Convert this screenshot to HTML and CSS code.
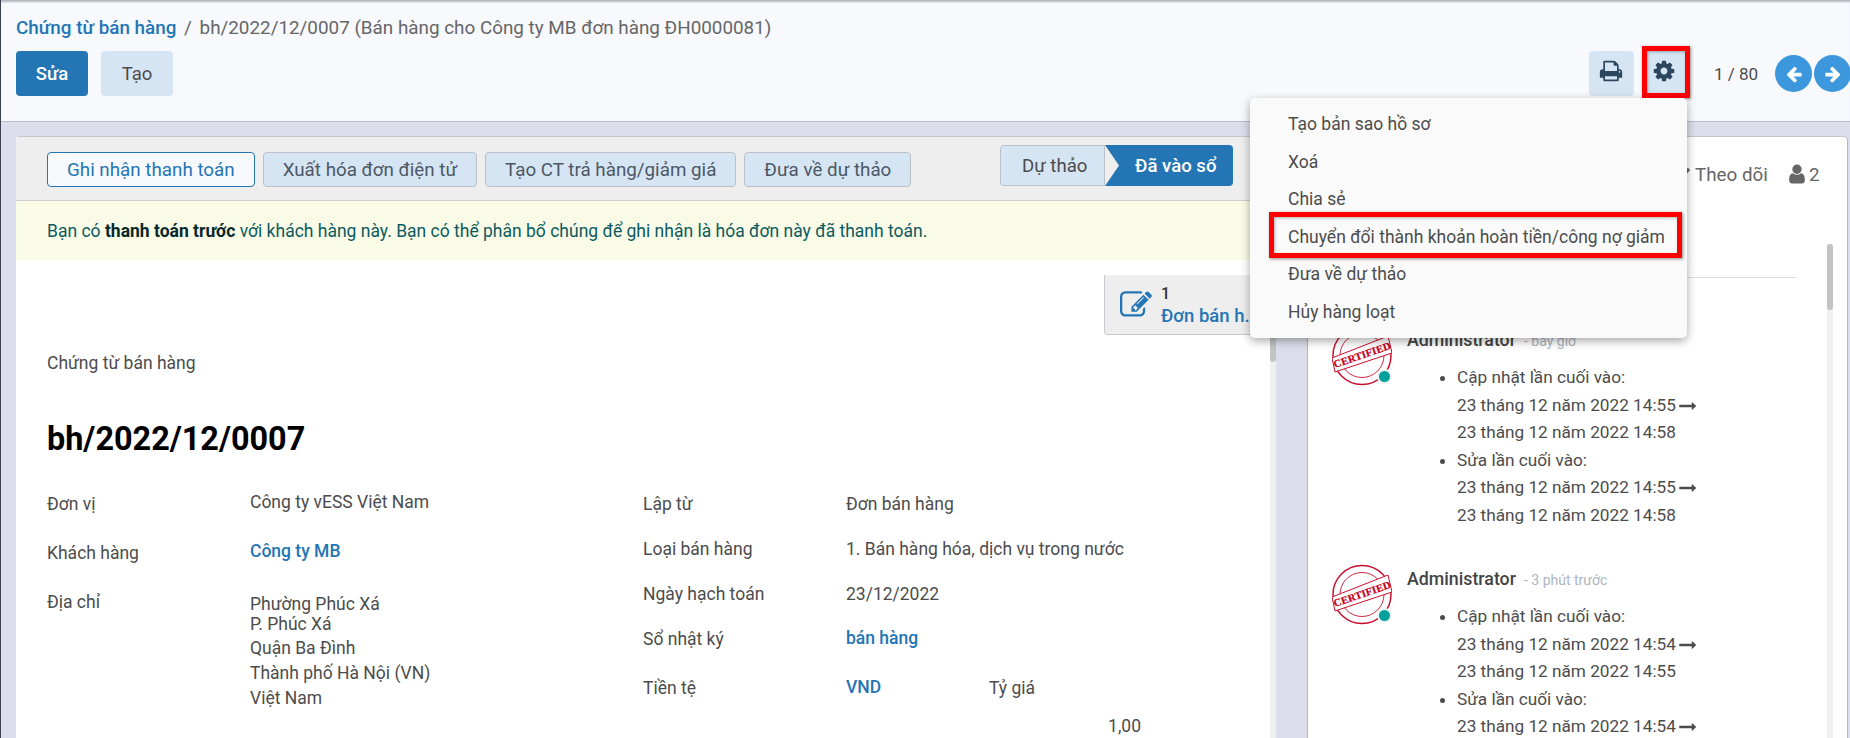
FILE: index.html
```html
<!DOCTYPE html>
<html lang="vi">
<head>
    <meta charset="UTF-8">
    <title>Chứng từ bán hàng</title>
    <link rel="stylesheet" href="styles.css">
</head>
<body>
    <header class="control_panel">
        <div class="breadcrumb">
            <a class="breadcrumb_link">Chứng từ bán hàng</a>
            <span class="breadcrumb_sep">/</span>
            <span>bh/2022/12/0007 (Bán hàng cho Công ty MB đơn hàng ĐH0000081)</span>
        </div>
        <div class="control_row">
            <button class="btn btn_primary">Sửa</button>
            <button class="btn btn_light">Tạo</button>
            <div class="control_right">
                <button class="icon_btn">
                    <svg class="icon_print" viewBox="0 0 1792 1792"><path d="M448 1536h896v-256h-896v256zm0-640h896v-384h-160q-40 0-68-28t-28-68v-160h-640v640zm1152 64q0-26-19-45t-45-19-45 19-19 45 19 45 45 19 45-19 19-45zm128 0v416q0 13-9.5 22.5t-22.5 9.5h-224v160q0 40-28 68t-68 28h-960q-40 0-68-28t-28-68v-160h-224q-13 0-22.5-9.5t-9.5-22.5v-416q0-79 56.5-135.5t135.5-56.5h64v-544q0-40 28-68t68-28h672q40 0 88 20t76 48l152 152q28 28 48 76t20 88v256h64q79 0 135.5 56.5t56.5 135.5z"/></svg>
                </button>
                <button class="icon_btn marked_btn">
                    <svg class="icon_gear" viewBox="0 0 1792 1792"><path d="M1152 896q0-106-75-181t-181-75-181 75-75 181 75 181 181 75 181-75 75-181zm512-109v222q0 12-8 23t-20 13l-185 28q-19 54-39 91 35 50 107 138 10 12 10 25t-9 23q-27 37-99 108t-94 71q-12 0-26-9l-138-108q-44 23-91 38-16 136-29 186-7 28-36 28h-222q-14 0-24.5-8.5t-11.5-21.5l-28-184q-49-16-90-37l-141 107q-10 9-25 9-14 0-25-11-126-114-165-168-7-10-7-23 0-12 8-23 15-21 51-66.5t54-70.5q-27-50-41-99l-183-27q-13-2-21-12.5t-8-23.5v-222q0-12 8-23t19-13l186-28q14-46 39-92-40-57-107-138-10-12-10-24 0-10 9-23 26-36 98.5-107.5t94.5-71.5q13 0 26 10l138 107q44-23 91-38 16-136 29-186 7-28 36-28h222q14 0 24.5 8.5t11.5 21.5l28 184q49 16 90 37l142-107q9-9 24-9 13 0 25 10 129 119 165 170 7 8 7 22 0 12-8 23-15 21-51 66.5t-54 70.5q26 50 41 98l183 28q13 2 21 12.5t8 23.5z"/></svg>
                </button>
                <span class="pager_text">1 / 80</span>
                <button class="nav_btn">
                    <svg viewBox="0 0 1792 1792"><path d="M1664 896v128q0 53-32.5 90.5t-84.5 37.5h-704l293 294q38 36 38 90t-38 90l-75 76q-37 37-90 37-52 0-91-37l-651-652q-37-37-37-90 0-52 37-91l651-650q38-38 91-38 52 0 90 38l75 74q38 38 38 91t-38 91l-293 293h704q52 0 84.5 37.5t32.5 90.5z"/></svg>
                </button>
                <button class="nav_btn">
                    <svg viewBox="0 0 1792 1792"><path d="M1600 960q0 54-37 91l-651 651q-39 37-91 37-51 0-90-37l-75-75q-38-38-38-91t38-91l293-293h-704q-52 0-84.5-37.5t-32.5-90.5v-128q0-53 32.5-90.5t84.5-37.5h704l-293-294q-38-36-38-90t38-90l75-75q38-38 90-38 53 0 91 38l651 651q37 35 37 90z"/></svg>
                </button>
            </div>
        </div>
        <ul class="action_menu">
            <li>Tạo bản sao hồ sơ</li>
            <li>Xoá</li>
            <li>Chia sẻ</li>
            <li class="marked_item">Chuyển đổi thành khoản hoàn tiền/công nợ giảm</li>
            <li>Đưa về dự thảo</li>
            <li>Hủy hàng loạt</li>
        </ul>
    </header>

    <main class="content">
        <section class="form_card">
            <div class="form_toolbar">
                <button class="tool_btn tool_btn_main">Ghi nhận thanh toán</button>
                <button class="tool_btn">Xuất hóa đơn điện tử</button>
                <button class="tool_btn">Tạo CT trả hàng/giảm giá</button>
                <button class="tool_btn">Đưa về dự thảo</button>
                <div class="statusbar">
                    <span class="status_item">Dự thảo</span>
                    <span class="status_item status_active">Đã vào sổ</span>
                </div>
            </div>
            <div class="form_alert">
                Bạn có <b>thanh toán trước</b> với khách hàng này. Bạn có thể phân bổ chúng để ghi nhận là hóa đơn này đã thanh toán.
            </div>
            <div class="form_scroll">
                <div class="sheet">
                    <div class="button_box">
                        <div class="smart_btn">
                            <svg class="icon_edit" viewBox="0 0 1792 1792"><path d="M888 1184l116-116-152-152-116 116v56h96v96h56zm440-720q-16-16-33 1l-350 350q-17 17-1 33t33-1l350-350q17-17 1-33zm80 594v190q0 119-84.5 203.5t-203.5 84.5h-832q-119 0-203.5-84.5t-84.5-203.5v-832q0-119 84.5-203.5t203.5-84.5h832q63 0 117 25 15 7 18 23 3 17-9 29l-49 49q-14 14-32 8-23-6-45-6h-832q-66 0-113 47t-47 113v832q0 66 47 113t113 47h832q66 0 113-47t47-113v-126q0-13 9-22l64-64q15-15 35-7t20 29zm-96-738l288 288-672 672h-288v-288zm444 132l-92 92-288-288 92-92q28-28 68-28t68 28l152 152q28 28 28 68t-28 68z"/></svg>
                            <div class="smart_text">
                                <div class="smart_count">1</div>
                                <div class="smart_label">Đơn bán h...</div>
                            </div>
                        </div>
                    </div>
                    <div class="sheet_kind">Chứng từ bán hàng</div>
                    <h1 class="sheet_title">bh/2022/12/0007</h1>
                    <div class="sheet_fields">
                        <div class="field_col field_col_left">
                            <div class="field_row">
                                <div class="field_label">Đơn vị</div>
                                <div class="field_value raised">Công ty vESS Việt Nam</div>
                            </div>
                            <div class="field_row">
                                <div class="field_label">Khách hàng</div>
                                <div class="field_value raised"><a class="link">Công ty MB</a></div>
                            </div>
                            <div class="field_row">
                                <div class="field_label">Địa chỉ</div>
                                <div class="field_value address">
                                    <div class="address_tight">Phường Phúc Xá</div>
                                    <div class="address_tight address_street">P. Phúc Xá</div>
                                    <div>Quận Ba Đình</div>
                                    <div>Thành phố Hà Nội (VN)</div>
                                    <div>Việt Nam</div>
                                </div>
                            </div>
                        </div>
                        <div class="field_col field_col_right">
                            <div class="field_row">
                                <div class="field_label">Lập từ</div>
                                <div class="field_value">Đơn bán hàng</div>
                            </div>
                            <div class="field_row">
                                <div class="field_label">Loại bán hàng</div>
                                <div class="field_value">1. Bán hàng hóa, dịch vụ trong nước</div>
                            </div>
                            <div class="field_row">
                                <div class="field_label">Ngày hạch toán</div>
                                <div class="field_value">23/12/2022</div>
                            </div>
                            <div class="field_row field_row_tall">
                                <div class="field_label">Sổ nhật ký</div>
                                <div class="field_value raised_small"><a class="link">bán hàng</a></div>
                            </div>
                            <div class="field_row currency_row">
                                <div class="field_label">Tiền tệ</div>
                                <div class="field_value raised_small currency_code"><a class="link">VND</a></div>
                                <div class="rate_label">Tỷ giá</div>
                            </div>
                            <div class="rate_value">1,00</div>
                        </div>
                    </div>
                </div>
                <div class="scroll_track"><div class="scroll_thumb sheet_thumb"></div></div>
            </div>
        </section>

        <aside class="chatter">
            <div class="chatter_top">
                <svg class="icon_check" viewBox="0 0 1792 1792"><path d="M1671 566q0 40-28 68l-724 724-136 136q-28 28-68 28t-68-28l-136-136-362-362q-28-28-28-68t28-68l136-136q28-28 68-28t68 28l294 295 656-657q28-28 68-28t68 28l136 136q28 28 28 68z"/></svg>
                <span class="follow_text">Theo dõi</span>
                <svg class="icon_user" viewBox="0 0 1792 1792"><path d="M1536 1399q0 109-62.5 187t-150.5 78h-854q-88 0-150.5-78t-62.5-187q0-85 8.5-160.5t31.5-152 58.5-131 94-89 134.5-34.5q131 128 313 128t313-128q76 0 134.5 34.5t94 89 58.5 131 31.5 152 8.5 160.5zm-256-887q0 159-112.5 271.5t-271.5 112.5-271.5-112.5-112.5-271.5 112.5-271.5 271.5-112.5 271.5 112.5 112.5 271.5z"/></svg>
                <span class="follower_count">2</span>
            </div>
            <div class="chatter_scroll">
                <div class="thread">
                    <div class="thread_sep"></div>
                    <article class="message">
                        <div class="avatar">
                            <svg viewBox="0 0 60 61">
                                <circle cx="30" cy="30.5" r="29" class="stamp_line"/>
                                <circle cx="30" cy="30.5" r="22" class="stamp_thin"/>
                                <polygon points="0,33 56,11 60,28 3,47" class="stamp_band"/>
                                <text x="30" y="33.5" transform="rotate(-19 30 29.5)" class="stamp_text">CERTIFIED</text>
                            </svg>
                            <span class="online_dot"></span>
                        </div>
                        <div class="message_body">
                            <div class="message_head"><span class="message_author">Administrator</span><span class="message_date">- bây giờ</span></div>
                            <ul class="track_list">
                                <li>Cập nhật lần cuối vào:
                                    <div>23 tháng 12 năm 2022 14:55<svg class="icon_arrow" viewBox="0 0 1792 1024"><path d="M1728 509q0 14-10 24l-384 354q-16 14-35 6-19-9-19-29v-224h-1248q-14 0-23-9t-9-23v-192q0-14 9-23t23-9h1248v-224q0-21 19-29t35 5l384 350q10 10 10 23z"/></svg></div>
                                    <div>23 tháng 12 năm 2022 14:58</div>
                                </li>
                                <li>Sửa lần cuối vào:
                                    <div>23 tháng 12 năm 2022 14:55<svg class="icon_arrow" viewBox="0 0 1792 1024"><path d="M1728 509q0 14-10 24l-384 354q-16 14-35 6-19-9-19-29v-224h-1248q-14 0-23-9t-9-23v-192q0-14 9-23t23-9h1248v-224q0-21 19-29t35 5l384 350q10 10 10 23z"/></svg></div>
                                    <div>23 tháng 12 năm 2022 14:58</div>
                                </li>
                            </ul>
                        </div>
                    </article>
                    <article class="message">
                        <div class="avatar">
                            <svg viewBox="0 0 60 61">
                                <circle cx="30" cy="30.5" r="29" class="stamp_line"/>
                                <circle cx="30" cy="30.5" r="22" class="stamp_thin"/>
                                <polygon points="0,33 56,11 60,28 3,47" class="stamp_band"/>
                                <text x="30" y="33.5" transform="rotate(-19 30 29.5)" class="stamp_text">CERTIFIED</text>
                            </svg>
                            <span class="online_dot"></span>
                        </div>
                        <div class="message_body">
                            <div class="message_head"><span class="message_author">Administrator</span><span class="message_date">- 3 phút trước</span></div>
                            <ul class="track_list">
                                <li>Cập nhật lần cuối vào:
                                    <div>23 tháng 12 năm 2022 14:54<svg class="icon_arrow" viewBox="0 0 1792 1024"><path d="M1728 509q0 14-10 24l-384 354q-16 14-35 6-19-9-19-29v-224h-1248q-14 0-23-9t-9-23v-192q0-14 9-23t23-9h1248v-224q0-21 19-29t35 5l384 350q10 10 10 23z"/></svg></div>
                                    <div>23 tháng 12 năm 2022 14:55</div>
                                </li>
                                <li>Sửa lần cuối vào:
                                    <div>23 tháng 12 năm 2022 14:54<svg class="icon_arrow" viewBox="0 0 1792 1024"><path d="M1728 509q0 14-10 24l-384 354q-16 14-35 6-19-9-19-29v-224h-1248q-14 0-23-9t-9-23v-192q0-14 9-23t23-9h1248v-224q0-21 19-29t35 5l384 350q10 10 10 23z"/></svg></div>
                                </li>
                            </ul>
                        </div>
                    </article>
                </div>
                <div class="scroll_track"><div class="scroll_thumb chatter_thumb"></div></div>
            </div>
        </aside>
    </main>
</body>
</html>
```

FILE: styles.css
```css
*,
*::after {
    box-sizing: border-box;
}
html,
body {
    height: 100%;
    margin: 0;
    overflow: hidden;
}
body {
    display: flex;
    flex-direction: column;
    background-color: #dcdfeb;
    border-left: 1px solid #3c4152;
    font-family: Roboto, "Noto Sans", sans-serif;
    font-size: 16px;
    color: #4c4c4c;
}
button {
    font-family: inherit;
    outline: none;
    cursor: pointer;
}

/* control panel */
.control_panel {
    position: relative;
    z-index: 5;
    height: 122px;
    flex: none;
    padding: 16px 0 0 15px;
    background-color: #f8f9fd;
    border-bottom: 1px solid #b9bccb;
    box-shadow: inset 0 3px 2px -1px #b4b6bd;
}
.breadcrumb {
    height: 24px;
    line-height: 24px;
    font-size: 18.85px;
    white-space: nowrap;
    color: #666;
}
.breadcrumb_link {
    font-weight: 500;
    color: #2475b4;
}
.breadcrumb_sep {
    margin: 0 3px;
}
.control_row {
    display: flex;
    align-items: center;
    margin-top: 11px;
}
.btn {
    width: 72px;
    height: 45px;
    margin-right: 13px;
    border: none;
    border-radius: 4px;
    font-size: 18.5px;
}
.btn_primary {
    background-color: #2475b4;
    color: #fff;
    font-weight: 500;
}
.btn_light {
    background-color: #d6e5f3;
    color: #4c4c4c;
}
.control_right {
    display: flex;
    align-items: center;
    margin-left: auto;
    margin-right: -1px;
}
.icon_btn {
    display: flex;
    align-items: center;
    justify-content: center;
    width: 45px;
    height: 45px;
    margin-right: 8px;
    padding: 0;
    border: none;
    border-radius: 4px;
    background-color: #d6e5f3;
}
.icon_print {
    width: 24px;
    height: 24px;
    margin-top: -5px;
    fill: #2c4660;
}
.icon_gear {
    width: 24px;
    height: 24px;
    margin-top: -5px;
    fill: #2c4660;
}
.marked_btn {
    position: relative;
    margin-right: 0;
}
.marked_btn::after {
    content: "";
    position: absolute;
    left: 0;
    top: -5px;
    width: 48px;
    height: 52px;
    border: 5px solid #f00;
    box-shadow: 1px 1px 3px rgba(0, 0, 0, 0.45), inset 1px 1px 3px rgba(0, 0, 0, 0.3);
}
.pager_text {
    margin: 0 17px 0 27px;
    font-size: 17px;
    white-space: nowrap;
}
.nav_btn {
    display: flex;
    align-items: center;
    justify-content: center;
    width: 37px;
    height: 37px;
    margin-right: 2px;
    padding: 0;
    border: none;
    border-radius: 50%;
    background-color: #3d97dd;
}
.nav_btn:last-child {
    margin-right: 0;
}
.nav_btn svg {
    width: 18px;
    height: 18px;
    fill: #fff;
}

/* dropdown */
.action_menu {
    position: absolute;
    left: 1249px;
    top: 98px;
    width: 437px;
    height: 240px;
    margin: 0;
    padding: 8px 0 0 38px;
    list-style: none;
    background-color: #fafafa;
    border-radius: 5px;
    box-shadow: 0 3px 10px rgba(0, 0, 0, 0.35);
}
.action_menu li {
    position: relative;
    height: 37.5px;
    line-height: 37.5px;
    font-size: 17.5px;
    white-space: nowrap;
}
.marked_item::after {
    content: "";
    position: absolute;
    left: -19px;
    top: -7px;
    width: 413px;
    height: 46px;
    border: 5px solid #f00;
    box-shadow: 1px 1px 3px rgba(0, 0, 0, 0.45), inset 1px 1px 3px rgba(0, 0, 0, 0.3);
}

/* main area */
.content {
    flex: 1;
    min-height: 0;
    display: flex;
    padding: 14px 2px 0 15px;
}
.form_card {
    width: 1260px;
    flex: none;
    display: flex;
    flex-direction: column;
    background-color: #fff;
    border-radius: 4px 4px 0 0;
    overflow: hidden;
}
.form_toolbar {
    position: relative;
    height: 65px;
    flex: none;
    display: flex;
    padding: 15px 43px 0 31px;
    background-color: #eee;
    border-top: 1px solid #c4c6cf;
    border-bottom: 1px solid #cfcfcf;
}
.tool_btn {
    height: 35px;
    margin-right: 8px;
    padding: 1px 19px 0;
    border: 1px solid #bcbfc6;
    border-radius: 4px;
    background-color: #d6e5f3;
    font-size: 18.8px;
    color: #4c5866;
    white-space: nowrap;
}
.tool_btn_main {
    background-color: #f8f9fd;
    border-color: #2475b4;
    color: #2475b4;
}
.statusbar {
    display: flex;
    height: 41px;
    margin: -7px 0 0 auto;
    font-size: 18.6px;
}
.status_item {
    display: flex;
    align-items: center;
    width: 105px;
    padding-left: 21px;
    background-color: #d6e5f3;
    border: 1px solid #bcbfc6;
    border-radius: 4px 0 0 4px;
}
.status_active {
    width: 128px;
    padding-left: 30px;
    background-color: #2475b4;
    border: none;
    border-radius: 0 4px 4px 0;
    color: #fff;
    font-weight: 500;
    clip-path: polygon(0 0, 100% 0, 100% 100%, 0 100%, 14px 50%);
}
.form_alert {
    height: 59px;
    flex: none;
    padding: 1px 0 0 31px;
    line-height: 59px;
    font-size: 17.5px;
    background-color: #f9fbe6;
    color: #0c5a60;
    white-space: nowrap;
}
.form_alert b {
    font-weight: 700;
    color: #08282b;
}
.form_scroll {
    flex: 1;
    min-height: 0;
    display: flex;
}
.sheet {
    flex: 1;
    padding: 15px 0 0 31px;
    white-space: nowrap;
}
.button_box {
    display: flex;
    justify-content: flex-end;
    height: 59px;
}
.smart_btn {
    display: flex;
    align-items: center;
    width: 166px;
    height: 60px;
    padding-left: 15px;
    background-color: #eee;
    border-left: 1px solid #c8cad0;
    border-bottom: 1px solid #c8cad0;
    border-radius: 0 0 0 4px;
}
.icon_edit {
    width: 32px;
    height: 32px;
    margin-right: 9px;
    fill: #2475b4;
}
.smart_count {
    height: 22px;
    line-height: 22px;
    font-weight: 500;
    color: #333;
}
.smart_label {
    height: 22px;
    line-height: 22px;
    font-size: 18.5px;
    font-weight: 500;
    color: #2475b4;
}
.sheet_kind {
    margin-top: 17px;
    height: 24px;
    line-height: 24px;
    font-size: 17.5px;
}
.sheet_title {
    margin: 44px 0 0;
    height: 40px;
    line-height: 40px;
    font-size: 32.4px;
    font-weight: 700;
    color: #000;
}
.sheet_fields {
    display: flex;
    margin-top: 33px;
    font-size: 17.5px;
}
.field_col_left {
    width: 596px;
    flex: none;
}
.field_col_right {
    width: 498px;
    flex: none;
}
.field_row {
    display: flex;
    min-height: 49px;
    line-height: 24px;
}
.field_col_right .field_row {
    min-height: 45px;
}
.field_col_right .field_row_tall {
    min-height: 49px;
}
.field_col_right .currency_row {
    min-height: 25px;
}
.field_label {
    width: 203px;
    flex: none;
}
.raised {
    margin-top: -2px;
}
.raised_small {
    margin-top: -1px;
}
.link {
    color: #2475b4;
    font-weight: 500;
}
.address {
    margin-top: 4px;
    line-height: 25px;
}
.address_tight {
    line-height: 20px;
}
.address_street {
    margin-bottom: 2px;
}
.currency_code {
    width: 143px;
    flex: none;
}
.rate_value {
    text-align: right;
    line-height: 24px;
    margin-top: 13px;
}

/* scrollbars */
.scroll_track {
    width: 6px;
    flex: none;
    background-color: #f0f0f0;
}
.scroll_thumb {
    background-color: #c4c4c4;
    border-radius: 3px;
}
.sheet_thumb {
    height: 102px;
}
.chatter_thumb {
    height: 66px;
}

/* chatter */
.chatter {
    margin-left: 31px;
    flex: 1;
    min-width: 0;
    display: flex;
    flex-direction: column;
    background-color: #fff;
    border-top: 1px solid #c4c6cf;
    border-left: 1px solid #b4b6bd;
    border-right: 1px solid #b4b6bd;
    border-radius: 0 5px 0 0;
    overflow: hidden;
}
.chatter_top {
    height: 107px;
    flex: none;
    display: flex;
    align-items: flex-start;
    padding: 26px 0 0 367px;
    line-height: 24px;
    font-size: 18.8px;
}
.icon_check {
    width: 16px;
    height: 16px;
    margin: 2px 4px 0 0;
    fill: #666;
}
.follow_text {
    width: 93px;
    color: #666;
}
.icon_user {
    width: 22px;
    height: 22px;
    margin: 0 1px 0 -2px;
    fill: #666;
}
.follower_count {
    color: #666;
}
.chatter_scroll {
    flex: 1;
    min-height: 0;
    display: flex;
    padding-right: 14px;
}
.thread {
    flex: 1;
    padding: 0 30px 0 24px;
    white-space: nowrap;
}
.thread_sep {
    height: 1px;
    margin: 33px 0 47px;
    background-color: #ddd;
}
.message {
    display: flex;
    margin-bottom: 35px;
}
.avatar {
    position: relative;
    width: 60px;
    height: 61px;
    flex: none;
    margin-right: 15px;
}
.avatar svg {
    display: block;
    width: 60px;
    height: 61px;
}
.stamp_line {
    fill: none;
    stroke: #c8102e;
    stroke-width: 1.5;
}
.stamp_thin {
    fill: none;
    stroke: #c8102e;
    stroke-width: 0.9;
}
.stamp_band {
    fill: #fff;
    stroke: #c8102e;
    stroke-width: 1;
}
.stamp_text {
    font-family: "Liberation Serif", serif;
    font-weight: 700;
    font-size: 10.5px;
    letter-spacing: 0.2px;
    text-anchor: middle;
    fill: #c4001a;
    stroke: #c4001a;
    stroke-width: 0.25;
}
.online_dot {
    position: absolute;
    right: 2px;
    bottom: 4px;
    width: 11px;
    height: 11px;
    border-radius: 50%;
    background-color: #00a09d;
    box-shadow: 0 0 0 2px #f0f2f2;
}
.message_body {
    flex: 1;
    padding-top: 3px;
}
.message_head {
    height: 24px;
    line-height: 24px;
}
.message_author {
    font-size: 17.8px;
    font-weight: 500;
    color: #444;
}
.message_date {
    margin-left: 8px;
    font-size: 14px;
    color: #adb5bd;
}
.track_list {
    margin: 12px 0 0;
    padding-left: 50px;
    font-size: 17.2px;
    line-height: 27.5px;
}
.icon_arrow {
    width: 18px;
    height: 10px;
    margin-left: 3px;
    fill: #4c4c4c;
}
```
